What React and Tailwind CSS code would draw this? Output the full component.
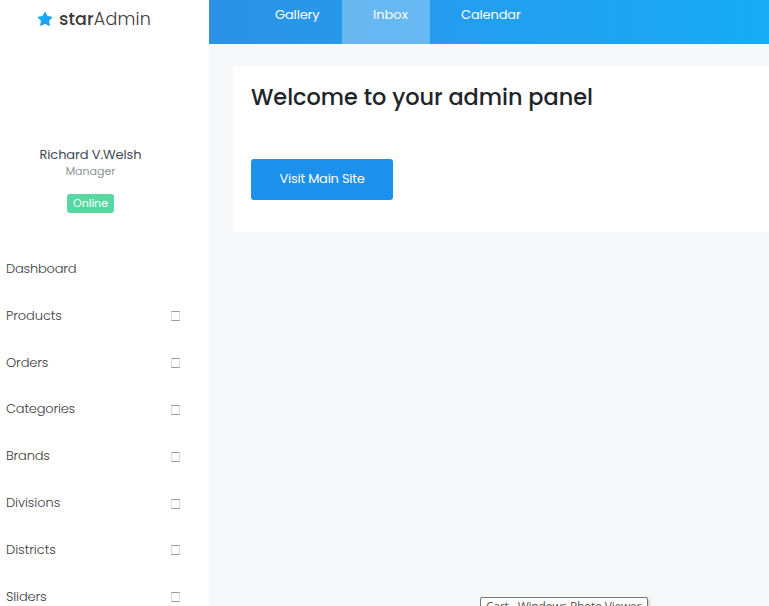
const NAV = [
  { label: 'Dashboard', cls: 'tracking-[-0.2px]' },
  { label: 'Products', cls: 'tracking-[-0.1px]', toggle: true },
  { label: 'Orders', cls: 'tracking-[-0.15px]', toggle: true },
  { label: 'Categories', cls: 'tracking-[-0.2px]', toggle: true },
  { label: 'Brands', cls: 'tracking-[-0.2px]', toggle: true },
  { label: 'Divisions', cls: 'tracking-[-0.1px]', toggle: true },
  { label: 'Districts', cls: 'tracking-[-0.05px]', toggle: true },
  { label: 'Sliders', cls: 'tracking-[-0.15px]', toggle: true },
];

function Logo() {
  return (
    <div className="flex h-[37px] shrink-0 items-center pl-[37px] text-[#3a3a3a]">
      <svg width="16" height="16" viewBox="0 0 16 16" className="mr-[6px] shrink-0">
        <defs>
          <linearGradient id="star" x1="0" y1="0" x2="1" y2="1">
            <stop offset="0" stopColor="#12b5fb" />
            <stop offset="1" stopColor="#1f94ee" />
          </linearGradient>
        </defs>
        <path
          d="M8 1.4 10.1 5.6 14.7 6.3 11.4 9.6 12.2 14.2 8 12.1 3.8 14.2 4.6 9.6 1.3 6.3 5.9 5.6Z"
          fill="url(#star)"
          stroke="url(#star)"
          strokeWidth="1.2"
          strokeLinejoin="round"
        />
      </svg>
      <span className="text-[17.5px] leading-[24px] font-medium tracking-[0.1px]">star</span>
      <span className="text-[17.5px] leading-[24px] font-light tracking-[0.2px]">Admin</span>
    </div>
  );
}

function Sidebar() {
  return (
    <aside className="flex h-full w-[209px] shrink-0 flex-col bg-white">
      <Logo />
      <div className="mt-[109px] flex w-[181px] flex-col items-center">
        <p className="text-[13px] leading-[18px] tracking-[-0.12px] text-[#434a54]">Richard V.Welsh</p>
        <p className="text-[11px] leading-[15px] text-[#8d949c]">Manager</p>
        <span className="mt-[15px] flex h-[19px] w-[47px] items-center justify-center rounded-[3px] bg-[#58d8a3] text-[11px] text-white">
          Online
        </span>
      </div>
      <nav className="mt-[32.7px]">
        {NAV.map((item) => (
          <div key={item.label} className="flex h-[46.8px] items-center pr-[29px] pl-[6px]">
            <span className={`grow text-[13px] leading-[20px] font-light text-[#3c3c3c] ${item.cls}`}>{item.label}</span>
            {item.toggle && <span className="mt-[1px] h-[10px] w-[9px] border border-x-[#dcdcd6] border-y-[#9a9a9a]" />}
          </div>
        ))}
      </nav>
    </aside>
  );
}

function TopBar() {
  return (
    <header className="flex h-[44px] shrink-0 bg-linear-to-r from-[#2b92e8] to-[#16abf5] pl-[35px] text-[13px] leading-[20px] tracking-[-0.15px] text-white">
      <a className="h-full w-[98px] pt-[5px] pl-[31px]">Gallery</a>
      <a className="h-full w-[88px] bg-white/30 pt-[5px] pl-[31px] tracking-normal">Inbox</a>
      <a className="h-full pt-[5px] pl-[31px]">Calendar</a>
    </header>
  );
}

export default function App() {
  return (
    <div className="relative flex h-[606px] w-[769px] overflow-hidden bg-[#f6f8fa] font-[Poppins,Inter,sans-serif]">
      <Sidebar />
      <div className="flex grow flex-col">
        <TopBar />
        <main className="mt-[22px] ml-[24px] h-[166px] bg-white pt-[16px] pl-[18px]">
          <h2 className="text-[22.4px] leading-[30px] font-medium whitespace-nowrap text-[#212529]">Welcome to your admin panel</h2>
          <button className="mt-[47px] flex h-[41px] w-[142px] items-center justify-center rounded-[3px] bg-[#1b90ed] pb-[2px] text-[13px] leading-[20px] tracking-[-0.25px] text-white">
            Visit Main Site
          </button>
        </main>
      </div>
      <div className="absolute top-[597px] left-[480px] h-[19px] w-[168px] rounded-[2px] border border-[#767676] bg-white pl-[5px] font-['Open_Sans',sans-serif] text-[12px] leading-[17px] tracking-[-0.25px] whitespace-nowrap text-[#575757] shadow-[2px_2px_2px_rgba(0,0,0,0.15)]">
        Cart - Windows Photo Viewer
      </div>
    </div>
  );
}
